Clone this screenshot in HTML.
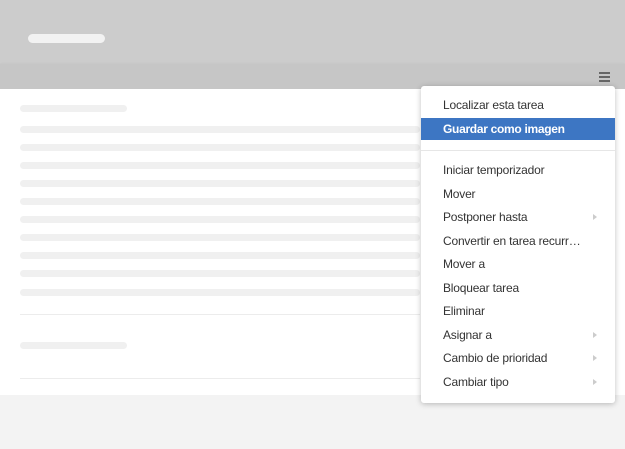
<!DOCTYPE html>
<html><head><meta charset="utf-8"><style>
*{margin:0;padding:0;box-sizing:border-box}
body{width:625px;height:449px;overflow:hidden;background:#f3f3f3;font-family:"Liberation Sans",sans-serif;position:relative}
.a{position:absolute}
.bar{position:absolute;background:#f0f0f0;border-radius:4px;height:7px}
.menu{position:absolute;left:421px;top:86px;width:194px;height:317px;background:#fff;border-radius:3px;box-shadow:0 1px 6px rgba(0,0,0,.25)}
.it{position:absolute;left:0;width:194px;height:23px;line-height:23px;padding-left:22px;font-size:12px;color:#333;letter-spacing:-0.2px}
.arr{position:absolute;right:18px;top:8px;width:0;height:0;border-left:4px solid #ccc;border-top:3.5px solid transparent;border-bottom:3.5px solid transparent}
</style></head><body>
<div class="a" style="left:0;top:0;width:625px;height:64px;background:#cccccc"></div>
<div class="a" style="left:28px;top:34px;width:77px;height:9px;background:#f2f2f2;border-radius:5px"></div>
<div class="a" style="left:0;top:64px;width:625px;height:25px;background:#c6c6c6;box-shadow:0 1px 3px rgba(0,0,0,.12)"></div>
<div class="a" style="left:0;top:89px;width:625px;height:306px;background:#fff"></div>
<div class="bar" style="left:20px;top:105px;width:107px"></div>
<div class="bar" style="left:20px;top:126px;width:400px"></div>
<div class="bar" style="left:20px;top:144px;width:400px"></div>
<div class="bar" style="left:20px;top:162px;width:400px"></div>
<div class="bar" style="left:20px;top:180px;width:400px"></div>
<div class="bar" style="left:20px;top:198px;width:400px"></div>
<div class="bar" style="left:20px;top:216px;width:400px"></div>
<div class="bar" style="left:20px;top:234px;width:400px"></div>
<div class="bar" style="left:20px;top:252px;width:400px"></div>
<div class="bar" style="left:20px;top:270px;width:400px"></div>
<div class="bar" style="left:20px;top:289px;width:400px"></div>
<div class="a" style="left:20px;top:314px;width:400px;height:1px;background:#ececec"></div>
<div class="bar" style="left:20px;top:342px;width:107px"></div>
<div class="a" style="left:20px;top:378px;width:400px;height:1px;background:#ececec"></div>
<div class="a" style="left:599px;top:72px;width:11px;height:2px;background:#666"></div>
<div class="a" style="left:599px;top:76px;width:11px;height:2px;background:#666"></div>
<div class="a" style="left:599px;top:80px;width:11px;height:2px;background:#666"></div>
<div class="menu">
<div class="it" style="top:8px">Localizar esta tarea</div>
<div class="it" style="top:32px;height:22px;line-height:22px;background:#3d76c3;color:#fff;font-weight:bold;letter-spacing:-0.3px">Guardar como imagen</div>
<div class="a" style="left:0;top:64px;width:194px;height:1px;background:#e6e6e6"></div>
<div class="it" style="top:73px">Iniciar temporizador</div>
<div class="it" style="top:97px">Mover</div>
<div class="it" style="top:120px">Postponer hasta<span class="arr"></span></div>
<div class="it" style="top:144px">Convertir en tarea recurr…</div>
<div class="it" style="top:167px">Mover a</div>
<div class="it" style="top:191px">Bloquear tarea</div>
<div class="it" style="top:214px">Eliminar</div>
<div class="it" style="top:238px">Asignar a<span class="arr"></span></div>
<div class="it" style="top:261px">Cambio de prioridad<span class="arr"></span></div>
<div class="it" style="top:285px">Cambiar tipo<span class="arr"></span></div>
</div>
</body></html>
